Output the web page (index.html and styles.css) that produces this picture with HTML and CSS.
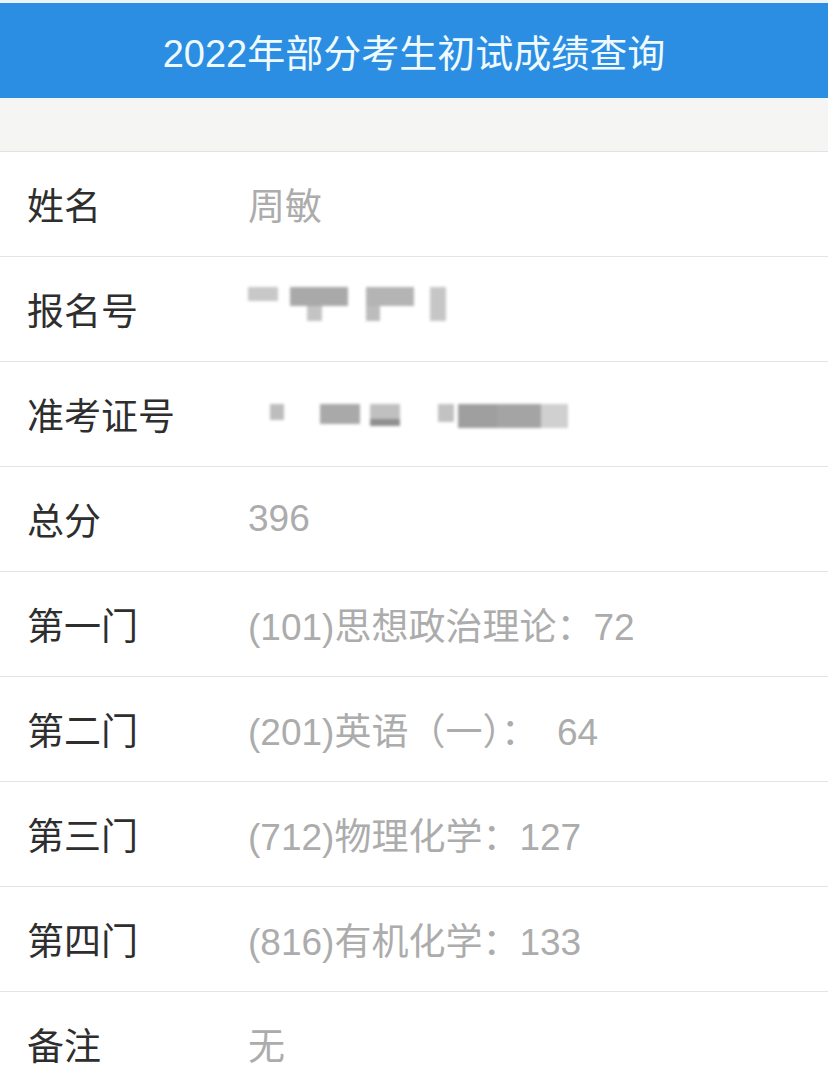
FILE: index.html
```html
<!DOCTYPE html>
<html lang="zh-CN">

<head>
    <meta charset="UTF-8">
    <meta name="viewport" content="width=device-width, initial-scale=1.0">
    <title>2022年部分考生初试成绩查询</title>
    <link rel="stylesheet" href="styles.css">
</head>

<body>
    <header class="top">
        <h1>2022年部分考生初试成绩查询</h1>
    </header>
    <div class="gap"></div>

    <div class="list">
        <div class="row">
            <span class="label">姓名</span>
            <span class="value">周敏</span>
        </div>
        <div class="row">
            <span class="label">报名号</span>
            <span class="value mask mask-a">
                <i class="b b1"></i><i class="b b2"></i><i class="b b3"></i><i class="b b4"></i>
            </span>
        </div>
        <div class="row">
            <span class="label">准考证号</span>
            <span class="value mask mask-b">
                <i class="b c1"></i><i class="b c2"></i><i class="b c3"></i><i class="b c4"></i><i class="b c5"></i>
            </span>
        </div>
        <div class="row">
            <span class="label">总分</span>
            <span class="value">396</span>
        </div>
        <div class="row">
            <span class="label">第一门</span>
            <span class="value">(101)思想政治理论：72</span>
        </div>
        <div class="row">
            <span class="label">第二门</span>
            <span class="value">(201)英语（一）：<span class="num">64</span></span>
        </div>
        <div class="row">
            <span class="label">第三门</span>
            <span class="value">(712)物理化学：127</span>
        </div>
        <div class="row">
            <span class="label">第四门</span>
            <span class="value">(816)有机化学：133</span>
        </div>
        <div class="row">
            <span class="label">备注</span>
            <span class="value">无</span>
        </div>
    </div>
</body>

</html>
```

FILE: styles.css
```css
* {
    margin: 0;
    padding: 0;
    box-sizing: border-box;
}

body {
    background: #fff;
    font-family: "Liberation Sans", "Noto Sans CJK SC", sans-serif;
}

.top {
    border-top: 3px solid #eaf2fa;
    height: 98px;
    background: #2b8ee2;
    display: flex;
    align-items: center;
    justify-content: center;
}

.top h1 {
    color: #eefaff;
    font-size: 38px;
    font-weight: normal;
}

.gap {
    height: 54px;
    background: #f5f5f3;
    border-bottom: 1px solid #e2e2e2;
}

.row {
    height: 105px;
    display: flex;
    align-items: center;
    border-bottom: 1px solid #e4e4e4;
}

.label {
    width: 248px;
    padding-left: 27px;
    font-size: 37px;
    color: #2e2e2e;
}

.value {
    font-size: 37px;
    color: #acacac;
}

.num {
    margin-left: 19px;
}

.mask {
    display: flex;
    align-items: flex-start;
    filter: blur(1.5px);
}

.b {
    display: block;
    background: #b8b8b8;
}

.mask-a {
    margin-top: -10px;
}

.b1 { width: 30px; height: 14px; background: #c8c8c8; margin-right: 12px; }
.b2 { width: 58px; height: 34px; background: linear-gradient(#a9a9a9 0 55%, transparent 55%), linear-gradient(90deg, transparent 30%, #c4c4c4 30% 55%, transparent 55%); margin-right: 18px; }
.b3 { width: 48px; height: 34px; background: linear-gradient(#b4b4b4 0 55%, transparent 55%), linear-gradient(90deg, #bcbcbc 0 30%, transparent 30%); margin-right: 16px; }
.b4 { width: 16px; height: 34px; background: #c6c6c6; }

.mask-b {
    margin-left: 22px;
    margin-top: 4px;
}

.c1 { width: 14px; height: 16px; background: #bdbdbd; margin-right: 36px; }
.c2 { width: 40px; height: 20px; background: #a9a9a9; margin-right: 10px; }
.c3 { width: 30px; height: 22px; background: linear-gradient(#c0c0c0 0 70%, #8f8f8f 70%); margin-right: 38px; }
.c4 { width: 16px; height: 18px; background: #c2c2c2; margin-right: 4px; }
.c5 { width: 110px; height: 24px; background: linear-gradient(90deg, #9f9f9f 0 35%, #a4a4a4 35% 75%, #d0d0d0 75%); }
```
